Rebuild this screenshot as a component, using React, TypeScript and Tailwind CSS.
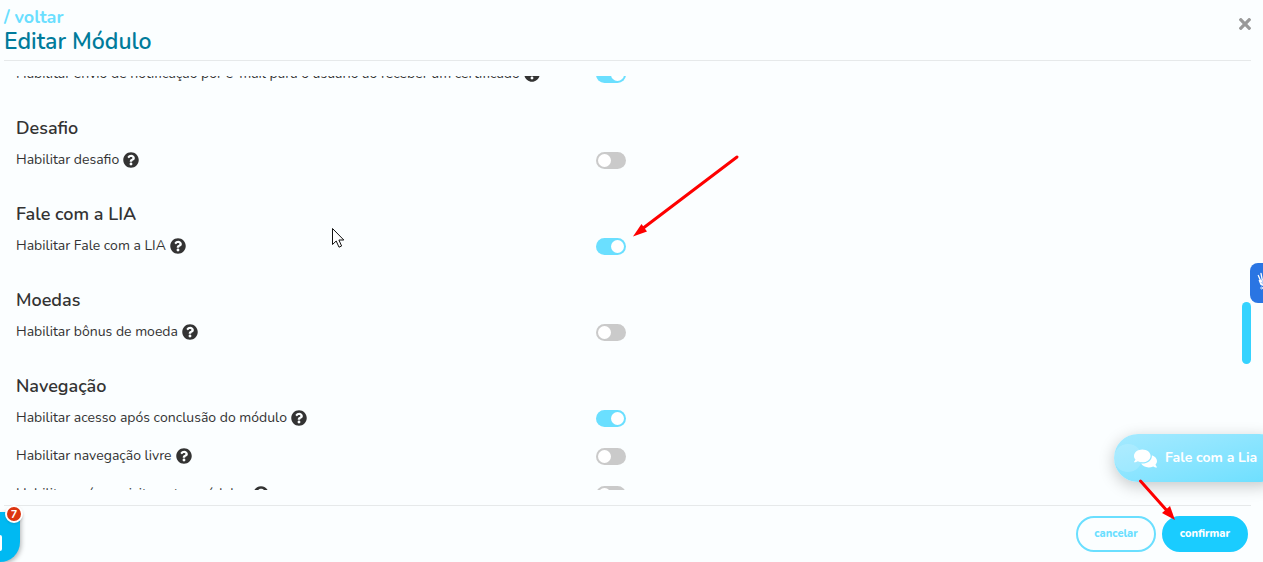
import { useState } from 'react';
import { FaComments, FaQuestionCircle, FaTimes } from 'react-icons/fa';

type Option = { id: string; label: string; enabled: boolean };
type Section = { title?: string; options: Option[] };

const SECTIONS: Section[] = [
  {
    options: [
      {
        id: 'email-certificado',
        label: 'Habilitar envio de notificação por e-mail para o usuário ao receber um certificado',
        enabled: true,
      },
    ],
  },
  { title: 'Desafio', options: [{ id: 'desafio', label: 'Habilitar desafio', enabled: false }] },
  { title: 'Fale com a LIA', options: [{ id: 'lia', label: 'Habilitar Fale com a LIA', enabled: true }] },
  { title: 'Moedas', options: [{ id: 'moeda', label: 'Habilitar bônus de moeda', enabled: false }] },
  {
    title: 'Navegação',
    options: [
      { id: 'acesso', label: 'Habilitar acesso após conclusão do módulo', enabled: true },
      { id: 'livre', label: 'Habilitar navegação livre', enabled: false },
      { id: 'pre-requisito', label: 'Habilitar pré-requisito entre módulos', enabled: false },
    ],
  },
];

function OptionRow({ option }: { option: Option }) {
  const [checked, setChecked] = useState(option.enabled);

  return (
    <div className="flex h-[38px] items-center">
      <div className="flex w-[47%] shrink-0 items-center gap-1">
        <label htmlFor={option.id} className="whitespace-nowrap">{option.label}</label>
        <button type="button" aria-label="Ajuda" className="shrink-0">
          <FaQuestionCircle className="size-4" />
        </button>
      </div>
      <input
        id={option.id}
        type="checkbox"
        checked={checked}
        onChange={(e) => setChecked(e.target.checked)}
        className="flex h-[17px] w-[30px] shrink-0 cursor-pointer appearance-none items-center rounded-full bg-[#cacaca] px-0.5 before:size-[13px] before:rounded-full before:bg-white checked:justify-end checked:bg-[#6adfff]"
      />
    </div>
  );
}

function Arrows() {
  return (
    <>
      <svg className="pointer-events-none absolute top-[150px] left-[630px]" width="115" height="92" fill="#fe0000">
        <path d="M107 7L12 79" stroke="#fe0000" strokeWidth="3" strokeLinecap="round" />
        <path d="M3 86.5L11.5 74L17 81.5Z" />
      </svg>
      <svg className="pointer-events-none absolute right-[83px] bottom-9" width="45" height="51" fill="#fe0000">
        <path d="M5.5 6L34 38" stroke="#fe0000" strokeWidth="3" strokeLinecap="round" />
        <path d="M40 45L27 38L35 31Z" />
      </svg>
    </>
  );
}

function Cursor() {
  return (
    <svg className="pointer-events-none absolute top-[227px] left-[331px]" width="14" height="22">
      <path
        d="M1.5 1.5V17.5L5.2 14L8 20.2L10.6 19L7.9 13H12.8Z"
        fill="#fff"
        stroke="#111"
        strokeWidth="1"
      />
    </svg>
  );
}

export default function App() {
  return (
    <div className="relative flex h-screen flex-col overflow-hidden bg-[#fbfeff] pr-3 pl-1 font-['Nunito','Lato',sans-serif] text-sm text-[#333]">
      <header className="flex h-[61px] shrink-0 items-start justify-between border-b border-[#e6e9ea] pt-[7px]">
        <div>
          <a href="#voltar" className="block text-lg leading-5 font-bold text-[#6adfff]">/ voltar</a>
          <h1 className="text-[23px] leading-[30px] font-semibold text-[#007b9b]">Editar Módulo</h1>
        </div>
        <button type="button" aria-label="Fechar" className="pt-2 text-[#999]">
          <FaTimes className="h-[18px] w-3" />
        </button>
      </header>

      <main className="mt-[15px] mb-[15px] min-h-0 flex-1 overflow-hidden pl-3">
        <div className="-mt-[21px] flex flex-col gap-[22px]">
          {SECTIONS.map((section) => (
            <section key={section.options[0].id}>
              {section.title && <h2 className="text-lg leading-[26px] font-semibold">{section.title}</h2>}
              {section.options.map((option) => <OptionRow key={option.id} option={option} />)}
            </section>
          ))}
        </div>
      </main>

      <footer className="flex h-[57px] shrink-0 items-start justify-end gap-1.5 border-t border-[#e6e9ea] pt-2.5 pr-[3px] text-[11px] font-extrabold">
        <button type="button" className="h-9 rounded-full border-2 border-[#6adfff] px-4 text-[#6adfff]">
          cancelar
        </button>
        <button type="button" className="h-9 rounded-full border-2 border-[#1accff] bg-[#1accff] px-4 text-white">
          confirmar
        </button>
      </footer>

      {/* Scroll thumb */}
      <div className="absolute top-[302px] right-3 h-[62px] w-[9px] rounded-full bg-[#35d3ff]" />

      {/* Accessibility widget */}
      <button
        type="button"
        aria-label="Libras"
        className="absolute top-[263px] right-0 h-10 w-[13px] overflow-hidden rounded-l-lg bg-[#2a75e3]"
      >
        <svg width="13" height="40" fill="none" stroke="#fff" strokeWidth="1.3" strokeLinecap="round">
          <path d="M8.3 12.5L11 18.5M11 10.5L12.3 17M9.3 17.5L11 21.5L13 22M12 17V22" />
          <circle cx="11.7" cy="25" r="1" strokeWidth="0.8" />
        </svg>
      </button>

      {/* Chat */}
      <button
        type="button"
        className="absolute -right-5 bottom-20 flex h-12 w-[169px] items-center gap-2 rounded-full bg-linear-to-br from-[#a5eaff] to-[#6adfff] pl-5 text-sm font-bold text-white shadow-[0_4px_16px_rgba(0,0,0,0.22)]"
      >
        <span className="absolute left-0 size-7 rounded-full bg-white/15" />
        <FaComments className="relative size-[23px]" />
        <span className="whitespace-nowrap">Fale com a Lia</span>
      </button>

      {/* Notifications */}
      <button
        type="button"
        aria-label="Notificações"
        className="absolute bottom-0 left-0 h-[50px] w-5 rounded-br-[20px] bg-[#00b9f2] shadow-[1px_2px_5px_rgba(0,0,0,0.3)]"
      >
        <span className="absolute top-[23px] left-0 h-4 w-0.5 rounded-r-full bg-white" />
        <span className="absolute -top-[7px] left-[5px] flex size-[18px] items-center justify-center rounded-full border-2 border-white bg-[#dc3510] text-[11px] leading-none font-bold text-white shadow">
          7
        </span>
      </button>

      <Arrows />
      <Cursor />
    </div>
  );
}
